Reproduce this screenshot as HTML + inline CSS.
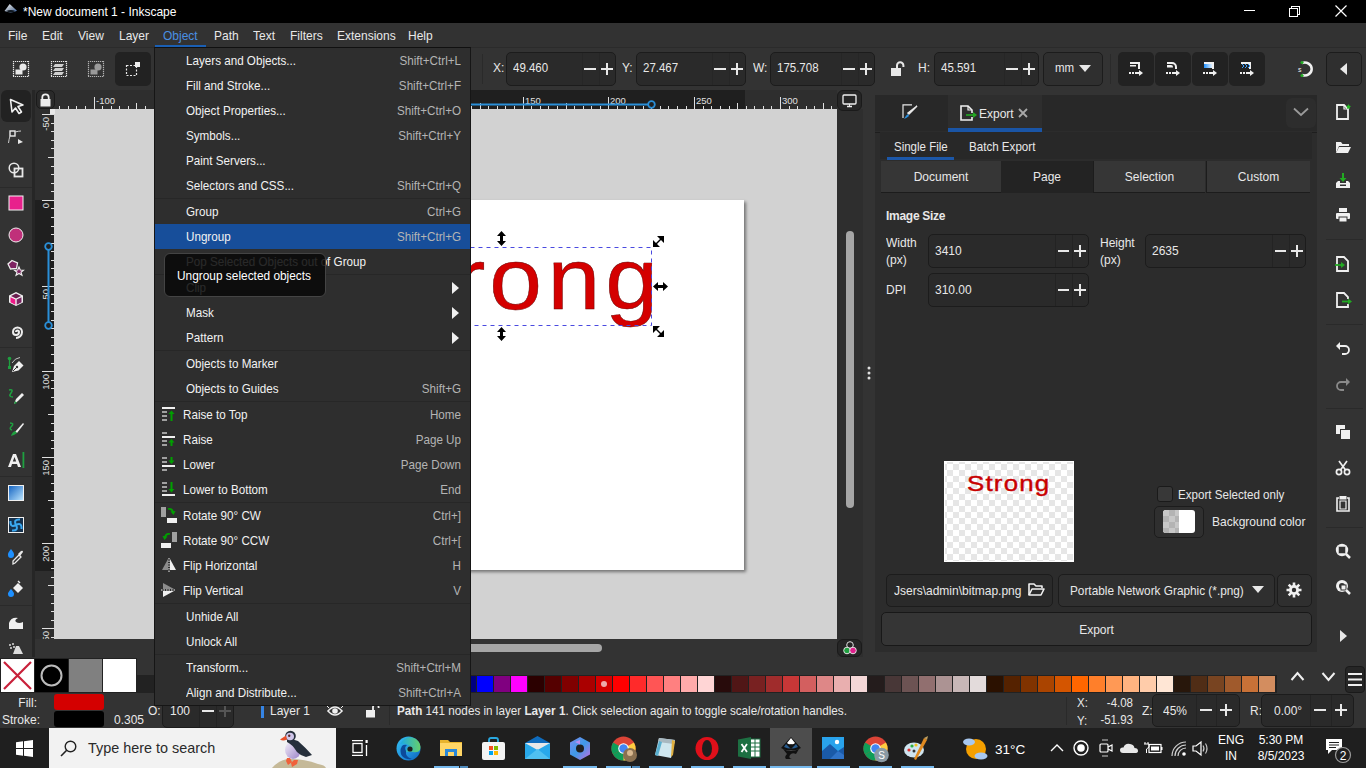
<!DOCTYPE html>
<html><head><meta charset="utf-8">
<style>
*{margin:0;padding:0;box-sizing:border-box}
html,body{width:1366px;height:768px;overflow:hidden;background:#333333;font-family:"Liberation Sans",sans-serif;color:#e8e8e8;font-size:12px}
.a{position:absolute}
.t{position:absolute;white-space:nowrap;line-height:1}
.ent{position:absolute;background:#2a2a2a;border:1px solid #1c1c1c;border-radius:5px}
.btn{position:absolute;background:#222222;border-radius:5px}
.pm{position:absolute;width:1px;background:#262626}
svg{position:absolute;overflow:visible}
</style></head><body>
<!-- title bar -->
<div class="a" style="left:0;top:0;width:1366px;height:23px;background:#000"></div>
<svg style="left:3px;top:3px" width="16" height="11" viewBox="0 0 16 11"><defs><linearGradient id="ik" x1="0" y1="0" x2="1" y2="1"><stop offset="0" stop-color="#ffffff"/><stop offset="0.6" stop-color="#8a9ab0"/><stop offset="1" stop-color="#3a6ab8"/></linearGradient></defs><path d="M6.7 1 L14 7.8 Q8 11 1.5 8 Z" fill="url(#ik)"/><path d="M3 8 Q8 6 12.5 8 Q8 10.5 3 8Z" fill="#101820"/></svg>
<div class="t" style="left:23px;top:6.32px;font-size:12.8px;color:#fff;transform:scaleX(0.938);transform-origin:0 0">*New document 1 - Inkscape</div>
<!-- window controls -->
<div class="a" style="left:1244px;top:10px;width:11px;height:1px;background:#fff"></div>
<div class="a" style="left:1291px;top:6px;width:9px;height:9px;border:1px solid #fff"></div>
<div class="a" style="left:1289px;top:8px;width:9px;height:9px;border:1px solid #fff;background:#000"></div>
<svg style="left:1335px;top:5px" width="12" height="12"><path d="M0.5 0.5 L11.5 11.5 M11.5 0.5 L0.5 11.5" stroke="#fff" stroke-width="1.2"/></svg>

<!-- menubar -->
<div class="a" style="left:0;top:23px;width:1366px;height:24px;background:#323232"></div>
<div class="t" style="left:8px;top:30.32px;font-size:12.8px;transform:scaleX(0.938);transform-origin:0 0">File</div>
<div class="t" style="left:42px;top:30.32px;font-size:12.8px;transform:scaleX(0.938);transform-origin:0 0">Edit</div>
<div class="t" style="left:78px;top:30.32px;font-size:12.8px;transform:scaleX(0.938);transform-origin:0 0">View</div>
<div class="t" style="left:119px;top:30.32px;font-size:12.8px;transform:scaleX(0.938);transform-origin:0 0">Layer</div>
<div class="t" style="left:163px;top:30.32px;color:#4a90e2;font-size:12.8px;transform:scaleX(0.938);transform-origin:0 0">Object</div>
<div class="a" style="left:155px;top:45px;width:51px;height:2px;background:#1a5fb4"></div>
<div class="t" style="left:214px;top:30.32px;font-size:12.8px;transform:scaleX(0.938);transform-origin:0 0">Path</div>
<div class="t" style="left:253px;top:30.32px;font-size:12.8px;transform:scaleX(0.938);transform-origin:0 0">Text</div>
<div class="t" style="left:290px;top:30.32px;font-size:12.8px;transform:scaleX(0.938);transform-origin:0 0">Filters</div>
<div class="t" style="left:337px;top:30.32px;font-size:12.8px;transform:scaleX(0.938);transform-origin:0 0">Extensions</div>
<div class="t" style="left:408px;top:30.32px;font-size:12.8px;transform:scaleX(0.938);transform-origin:0 0">Help</div>

<!-- command bar -->
<div class="a" style="left:0;top:47px;width:1366px;height:1px;background:#2b2b2b"></div>
<div id="cmdbar">
<svg style="left:13px;top:61px" width="16" height="16" viewBox="0 0 16 16"><path d="M0 0.5H16M0 15.5H16M0.5 0V16M15.5 0V16" stroke="#e8e8e8" stroke-width="1.2" stroke-dasharray="1.2 0.8" fill="none"/><circle cx="10" cy="6" r="3.6" fill="#e8e8e8"/><rect x="2.5" y="8.5" width="7" height="5" fill="#e8e8e8"/></svg>
<svg style="left:51px;top:61px" width="16" height="16" viewBox="0 0 16 16"><path d="M0 0.5H16M0 15.5H16M0.5 0V16M15.5 0V16" stroke="#e8e8e8" stroke-width="1.2" stroke-dasharray="1.2 0.8" fill="none"/><path d="M4 3h9l-2 3H2zM4 7h9l-2 3H2zM4 11h9l-2 3H2z" fill="#cfcfcf"/></svg>
<svg style="left:88px;top:61px" width="16" height="16" viewBox="0 0 16 16"><path d="M0 0.5H16M0 15.5H16M0.5 0V16M15.5 0V16" stroke="#b0b0b0" stroke-width="1.2" stroke-dasharray="1.2 0.8" fill="none"/><circle cx="10" cy="6" r="3.6" fill="#9a9a9a"/><rect x="2.5" y="8.5" width="7" height="5" fill="#9a9a9a"/></svg>
<div class="btn" style="left:115px;top:52px;width:36px;height:34px"></div>
<svg style="left:126px;top:62px" width="15" height="15" viewBox="0 0 15 15"><rect x="0.5" y="3.5" width="10" height="10" fill="none" stroke="#e8e8e8" stroke-width="1.2" stroke-dasharray="2 1.5"/><rect x="9" y="0" width="5" height="5" fill="#f0f0f0"/></svg>
<div class="a" style="left:482px;top:54px;width:1px;height:30px;background:#2a2a2a"></div>
<div class="t" style="left:493px;top:62.32px;font-size:12.8px;transform:scaleX(0.938);transform-origin:0 0">X:</div>
<div class="ent" style="left:506px;top:52px;width:110px;height:34px"></div>
<div class="pm" style="left:582px;top:53px;height:32px"></div><div class="pm" style="left:599px;top:53px;height:32px"></div>
<div class="t" style="left:513px;top:61.90px;font-size:12.8px;transform:scaleX(0.898);transform-origin:0 0">49.460</div>
<div class="a" style="left:584px;top:68px;width:12px;height:2px;background:#e8e8e8"></div>
<svg style="left:601px;top:63px" width="12" height="12"><path d="M0 6h12M6 0v12" stroke="#e8e8e8" stroke-width="2"/></svg>
<div class="t" style="left:622px;top:62.32px;font-size:12.8px;transform:scaleX(0.938);transform-origin:0 0">Y:</div>
<div class="ent" style="left:636px;top:52px;width:110px;height:34px"></div>
<div class="pm" style="left:712px;top:53px;height:32px"></div><div class="pm" style="left:729px;top:53px;height:32px"></div>
<div class="t" style="left:643px;top:61.90px;font-size:12.8px;transform:scaleX(0.898);transform-origin:0 0">27.467</div>
<div class="a" style="left:714px;top:68px;width:12px;height:2px;background:#e8e8e8"></div>
<svg style="left:731px;top:63px" width="12" height="12"><path d="M0 6h12M6 0v12" stroke="#e8e8e8" stroke-width="2"/></svg>
<div class="t" style="left:753px;top:62.32px;font-size:12.8px;transform:scaleX(0.938);transform-origin:0 0">W:</div>
<div class="ent" style="left:770px;top:52px;width:105px;height:34px"></div>
<div class="pm" style="left:841px;top:53px;height:32px"></div><div class="pm" style="left:858px;top:53px;height:32px"></div>
<div class="t" style="left:777px;top:61.90px;font-size:12.8px;transform:scaleX(0.898);transform-origin:0 0">175.708</div>
<div class="a" style="left:843px;top:68px;width:12px;height:2px;background:#e8e8e8"></div>
<svg style="left:860px;top:63px" width="12" height="12"><path d="M0 6h12M6 0v12" stroke="#e8e8e8" stroke-width="2"/></svg>
<svg style="left:891px;top:61px" width="15" height="16" viewBox="0 0 15 16"><path d="M6 7V4.5a3.2 3.2 0 0 1 6.4 0V6" fill="none" stroke="#e8e8e8" stroke-width="2"/><rect x="0" y="7" width="10" height="8" fill="#e8e8e8"/></svg>
<div class="t" style="left:918px;top:62.32px;font-size:12.8px;transform:scaleX(0.938);transform-origin:0 0">H:</div>
<div class="ent" style="left:934px;top:52px;width:105px;height:34px"></div>
<div class="pm" style="left:1004px;top:53px;height:32px"></div><div class="pm" style="left:1021px;top:53px;height:32px"></div>
<div class="t" style="left:941px;top:61.90px;font-size:12.8px;transform:scaleX(0.898);transform-origin:0 0">45.591</div>
<div class="a" style="left:1006px;top:68px;width:12px;height:2px;background:#e8e8e8"></div>
<svg style="left:1023px;top:63px" width="12" height="12"><path d="M0 6h12M6 0v12" stroke="#e8e8e8" stroke-width="2"/></svg>
<div class="a" style="left:1043px;top:52px;width:60px;height:34px;background:#2f2f2f;border:1px solid #1c1c1c;border-radius:5px"></div>
<div class="t" style="left:1055px;top:61.90px;font-size:12.8px;transform:scaleX(0.898);transform-origin:0 0">mm</div>
<svg style="left:1079px;top:65px" width="12" height="8"><path d="M0 0h12L6 7z" fill="#e8e8e8"/></svg>
<div class="a" style="left:1110px;top:54px;width:1px;height:30px;background:#2a2a2a"></div>
<div class="btn" style="left:1118px;top:52px;width:36px;height:34px"></div>
<div class="btn" style="left:1155px;top:52px;width:36px;height:34px"></div>
<div class="btn" style="left:1192px;top:52px;width:36px;height:34px"></div>
<div class="btn" style="left:1229px;top:52px;width:36px;height:34px"></div>
<svg style="left:1128px;top:61px" width="16" height="16" viewBox="0 0 16 16" fill="#f0f0f0"><path d="M2 1h10v7h-2V3H2z"/><rect x="2" y="4" width="6" height="1.5"/><rect x="1" y="11" width="2" height="2"/><rect x="4" y="11" width="2" height="2"/><rect x="7" y="11" width="4" height="2"/><path d="M11 9l4 3-4 3z"/></svg>
<svg style="left:1165px;top:61px" width="16" height="16" viewBox="0 0 16 16" fill="#f0f0f0"><path d="M2 1h5a5 5 0 0 1 5 5v2h-2V6a3 3 0 0 0-3-3H2z"/><path d="M2 4h4a2 2 0 0 1 2 2v0.5H2z"/><rect x="1" y="11" width="2" height="2"/><rect x="4" y="11" width="2" height="2"/><rect x="7" y="11" width="4" height="2"/><path d="M11 9l4 3-4 3z"/></svg>
<svg style="left:1202px;top:61px" width="16" height="16" viewBox="0 0 16 16"><defs><linearGradient id="gb" x1="0" x2="1"><stop offset="0" stop-color="#1e90ff"/><stop offset="1" stop-color="#e0f0ff"/></linearGradient></defs><path d="M2 1h10v7h-2V3H2z" fill="#f0f0f0"/><rect x="2" y="3" width="8" height="4" fill="url(#gb)"/><g fill="#f0f0f0"><rect x="1" y="11" width="2" height="2"/><rect x="4" y="11" width="2" height="2"/><rect x="7" y="11" width="4" height="2"/><path d="M11 9l4 3-4 3z"/></g></svg>
<svg style="left:1239px;top:61px" width="16" height="16" viewBox="0 0 16 16"><path d="M2 1h10v7h-2V3H2z" fill="#f0f0f0"/><path d="M3 3l2 2-2 2M6 3l2 2-2 2M9 3l2 2-2 2" stroke="#3aa0ff" fill="none" stroke-width="1"/><g fill="#f0f0f0"><rect x="1" y="11" width="2" height="2"/><rect x="4" y="11" width="2" height="2"/><rect x="7" y="11" width="4" height="2"/><path d="M11 9l4 3-4 3z"/></g></svg>
<svg style="left:1297px;top:60px" width="20" height="18" viewBox="0 0 20 18"><path d="M5 3a7 6.5 0 1 1 0 12" fill="none" stroke="#f0f0f0" stroke-width="2.5"/><circle cx="5" cy="2.5" r="1.6" fill="#22aa22"/><circle cx="5" cy="15.5" r="1.6" fill="#22aa22"/><text x="1" y="12" font-size="7" fill="#f0f0f0" font-family="Liberation Sans">s</text></svg>
<div class="a" style="left:1326px;top:52px;width:36px;height:34px;background:#2f2f2f;border:1px solid #1c1c1c;border-radius:5px"></div>
<svg style="left:1340px;top:63px" width="8" height="12"><path d="M7 0v12L0 6z" fill="#e8e8e8"/></svg>
</div>

<!-- toolbox -->
<div class="a" style="left:32px;top:90px;width:3px;height:570px;background:#262626"></div>
<div id="toolbox">
<div class="btn" style="left:1px;top:90px;width:30px;height:32px;border-radius:6px"></div>
<svg style="left:9px;top:98px" width="16" height="17" viewBox="0 0 16 17"><path d="M1.5 1.5 L14 7 L9 8.5 L12.5 14 L10 15.5 L6.5 10 L3 14 Z" fill="none" stroke="#f0f0f0" stroke-width="1.6" stroke-linejoin="round"/></svg>
<svg style="left:8px;top:130px" width="16" height="16" viewBox="0 0 16 16"><rect x="2" y="1" width="5" height="5" fill="none" stroke="#e8e8e8" stroke-width="1.4"/><path d="M7 2 Q11 1 13 1 M2 6 Q1 9 0.5 13" stroke="#ccc" fill="none"/><path d="M10 9 L15 12 L10 14 Z" fill="#e8e8e8"/></svg>
<svg style="left:8px;top:162px" width="16" height="16" viewBox="0 0 16 16"><circle cx="6" cy="6" r="4.8" fill="none" stroke="#e8e8e8" stroke-width="1.5"/><rect x="6.5" y="6.5" width="8" height="8" fill="none" stroke="#e8e8e8" stroke-width="1.8"/></svg>
<div class="a" style="left:0;top:187px;width:32px;height:1px;background:#2a2a2a"></div>
<svg style="left:8px;top:195px" width="16" height="16"><rect x="1" y="1" width="14" height="14" fill="#e8218c" stroke="#f5f5f5" stroke-width="1"/></svg>
<svg style="left:8px;top:227px" width="16" height="16"><circle cx="8" cy="8" r="7" fill="#c0307a" stroke="#f0f0f0" stroke-width="1"/></svg>
<svg style="left:7px;top:259px" width="18" height="17" viewBox="0 0 18 17"><path d="M5 1.5 L10.5 4 L9.5 9.5 L3.5 10 L1 5 Z" fill="#7e2462" stroke="#eee" stroke-width="1.3"/><path d="M12 8 L13.3 11 L16.5 11.2 L14 13.2 L15 16.3 L12 14.5 L9 16.3 L10 13.2 L7.5 11.2 L10.7 11 Z" fill="#7e2462" stroke="#eee" stroke-width="1.1"/></svg>
<svg style="left:8px;top:291px" width="16" height="16" viewBox="0 0 16 16"><path d="M8 1 L15 4.5 L15 11.5 L8 15 L1 11.5 L1 4.5 Z" fill="#f0f0f0"/><path d="M8 2.5 L13 5 L8 7.5 L3 5Z" fill="#6a2050"/><path d="M2.5 6.2 L7.3 8.6 L7.3 13.8 L2.5 11.3Z" fill="#ee1a88"/><path d="M13.5 6.2 L8.7 8.6 L8.7 13.8 L13.5 11.3Z" fill="#7a2462"/></svg>
<svg style="left:8px;top:323px" width="16" height="16" viewBox="0 0 16 16"><path d="M8 9 a1.5 1.5 0 0 1 3 0 a3 3 0 0 1 -6 0 a4.5 4.5 0 0 1 9 0 a6 6 0 0 1 -6 6" fill="none" stroke="#eeeeee" stroke-width="2"/></svg>
<div class="a" style="left:0;top:347px;width:32px;height:1px;background:#2a2a2a"></div>
<svg style="left:7px;top:356px" width="18" height="17" viewBox="0 0 18 17"><path d="M2.5 3V11" stroke="#1fa040" stroke-width="1.3"/><circle cx="2.5" cy="2.5" r="1.8" fill="#1fa040"/><rect x="1" y="10" width="3" height="3" fill="#1fa040"/><path d="M5 7 Q8 2 13 1.5" stroke="#cfcfcf" fill="none" stroke-width="0.9"/><path d="M5 16 L7 10 L12 5 L16.5 9.5 L11.5 14.5 Z" fill="#f0f0f0"/><path d="M6 15 L9.5 11.5" stroke="#333" stroke-width="1"/><circle cx="10" cy="11" r="1.2" fill="#333"/></svg>
<svg style="left:7px;top:388px" width="18" height="18" viewBox="0 0 18 18"><path d="M2 2 Q7 1 4 5 Q1 9 6 9" stroke="#1fa040" fill="none" stroke-width="1.6"/><path d="M7 16 L9 11 L15 5 L17 7 L11 13 Z" fill="#f0f0f0"/><path d="M7 16 L8 13 L10 15Z" fill="#1fa040"/></svg>
<svg style="left:7px;top:420px" width="18" height="18" viewBox="0 0 18 18"><path d="M3 3 Q8 3 4 7 Q2 9 5 10" stroke="#1fa040" fill="none" stroke-width="1.5"/><path d="M8 12 L16 3 L17 4 L10 13 Z" fill="#f0f0f0"/><path d="M4 16 Q5 12 8 11 L10 13 Q8 15 4 16Z" fill="#1fa040"/></svg>
<svg style="left:7px;top:451px" width="20" height="18" viewBox="0 0 20 18"><path d="M1 16 L6 3 L9 3 L14 16 L11 16 L10 13 L5 13 L4 16Z M5.8 10.5 L9.2 10.5 L7.5 6Z" fill="#f0f0f0" fill-rule="evenodd"/><rect x="15.5" y="1" width="1.8" height="16" fill="#1fa040"/></svg>
<div class="a" style="left:0;top:476px;width:32px;height:1px;background:#2a2a2a"></div>
<svg style="left:8px;top:485px" width="16" height="16"><defs><linearGradient id="gt" x1="0" y1="0" x2="1" y2="1"><stop offset="0" stop-color="#1060c0"/><stop offset="1" stop-color="#c0e8ff"/></linearGradient></defs><rect x="0.5" y="0.5" width="15" height="15" fill="url(#gt)" stroke="#f0f0f0"/></svg>
<svg style="left:8px;top:517px" width="16" height="16" viewBox="0 0 16 16"><rect x="0.5" y="0.5" width="15" height="15" fill="#16324e" stroke="#f0f0f0"/><path d="M8 8 Q5 2 12 2.5 M8 8 Q14 5 13.5 12 M8 8 Q11 14 4 13.5 M8 8 Q2 11 2.5 4" stroke="#3aa8f0" fill="none" stroke-width="2"/></svg>
<svg style="left:7px;top:548px" width="18" height="17" viewBox="0 0 18 17"><path d="M4 1 Q7.5 5 7 7 A3 3 0 0 1 1 7 Q0.5 5 4 1Z" fill="#1e90ff"/><path d="M6 16 L6 13 L12 7 L14 9 L8 15 Z" fill="none" stroke="#e8e8e8" stroke-width="1.3"/><path d="M11 6 L14 3 Q16 2 16 4 L13 8Z" fill="#e8e8e8"/></svg>
<svg style="left:7px;top:580px" width="18" height="17" viewBox="0 0 18 17"><path d="M4 9 Q7.5 13 7 14 A3 3 0 0 1 1 14 Q0.5 13 4 9Z" fill="#1e90ff"/><path d="M6 8 L11 3 L16 8 L11 13Z" fill="#f0f0f0"/><path d="M11 1 L13 3" stroke="#f0f0f0" stroke-width="1.4"/></svg>
<div class="a" style="left:0;top:605px;width:32px;height:1px;background:#2a2a2a"></div>
<svg style="left:8px;top:614px" width="16" height="16" viewBox="0 0 16 16"><path d="M1 15 L1 9 Q3 3 10 4 Q6 6 8 8 Q11 10 15 8 L15 15 Z" fill="#f0f0f0"/></svg>
<svg style="left:8px;top:643px" width="16" height="12" viewBox="0 0 16 12"><g fill="#ddd"><circle cx="2" cy="2" r="1"/><circle cx="5" cy="1" r="1"/><circle cx="3" cy="5" r="1"/><circle cx="6" cy="4" r="1"/><path d="M8 3 L11 3 L15 11 L5 11Z"/></g></svg>
</div>

<!-- rulers & canvas -->
<div id="canvasarea">
<div class="a" style="left:35px;top:90px;width:802px;height:19px;background:#2e2e2e"></div>
<div class="a" style="left:266px;top:90px;width:479px;height:19px;background:#1f1f1f"></div>
<div class="a" style="left:35px;top:109px;width:19px;height:530px;background:#2e2e2e"></div>
<div class="a" style="left:35px;top:200px;width:19px;height:371px;background:#1f1f1f"></div>
<div class="a" style="left:36px;top:90px;width:19px;height:19px;background:#2a2a2a;border:1px solid #1a1a1a;border-radius:5px"></div>
<svg style="left:40px;top:93px" width="11" height="14" viewBox="0 0 11 14"><path d="M2.3 6.5V4.5a3.2 3.2 0 0 1 6.4 0V6.5" fill="none" stroke="#ececec" stroke-width="1.8"/><rect x="0.5" y="6" width="10" height="7.5" fill="#ececec"/></svg>
<svg style="left:0;top:0" width="1366" height="768"><path d="M59.5 106V109M68.5 106V109M76.5 106V109M85.5 106V109M94.5 97V109M102.5 106V109M111.5 106V109M119.5 106V109M128.5 106V109M136.5 103V109M145.5 106V109M154.5 106V109M162.5 106V109M171.5 106V109M179.5 97V109M188.5 106V109M197.5 106V109M205.5 106V109M214.5 106V109M222.5 103V109M231.5 106V109M239.5 106V109M248.5 106V109M257.5 106V109M265.5 97V109M274.5 106V109M282.5 106V109M291.5 106V109M300.5 106V109M308.5 103V109M317.5 106V109M325.5 106V109M334.5 106V109M342.5 106V109M351.5 97V109M360.5 106V109M368.5 106V109M377.5 106V109M385.5 106V109M394.5 103V109M402.5 106V109M411.5 106V109M420.5 106V109M428.5 106V109M437.5 97V109M445.5 106V109M454.5 106V109M463.5 106V109M471.5 106V109M480.5 103V109M488.5 106V109M497.5 106V109M505.5 106V109M514.5 106V109M523.5 97V109M531.5 106V109M540.5 106V109M548.5 106V109M557.5 106V109M566.5 103V109M574.5 106V109M583.5 106V109M591.5 106V109M600.5 106V109M608.5 97V109M617.5 106V109M626.5 106V109M634.5 106V109M643.5 106V109M651.5 103V109M660.5 106V109M668.5 106V109M677.5 106V109M686.5 106V109M694.5 97V109M703.5 106V109M711.5 106V109M720.5 106V109M729.5 106V109M737.5 103V109M746.5 106V109M754.5 106V109M763.5 106V109M771.5 106V109M780.5 97V109M789.5 106V109M797.5 106V109M806.5 106V109M814.5 106V109M823.5 103V109M831.5 106V109M42 114.5H54M51 123.5H54M51 131.5H54M51 140.5H54M51 148.5H54M48 157.5H54M51 166.5H54M51 174.5H54M51 183.5H54M51 191.5H54M42 200.5H54M51 208.5H54M51 217.5H54M51 226.5H54M51 234.5H54M48 243.5H54M51 251.5H54M51 260.5H54M51 268.5H54M51 277.5H54M42 286.5H54M51 294.5H54M51 303.5H54M51 311.5H54M51 320.5H54M48 328.5H54M51 337.5H54M51 345.5H54M51 354.5H54M51 363.5H54M42 371.5H54M51 380.5H54M51 388.5H54M51 397.5H54M51 405.5H54M48 414.5H54M51 423.5H54M51 431.5H54M51 440.5H54M51 448.5H54M42 457.5H54M51 465.5H54M51 474.5H54M51 483.5H54M51 491.5H54M48 500.5H54M51 508.5H54M51 517.5H54M51 525.5H54M51 534.5H54M42 543.5H54M51 551.5H54M51 560.5H54M51 568.5H54M51 577.5H54M48 585.5H54M51 594.5H54M51 603.5H54M51 611.5H54M51 620.5H54M42 628.5H54M51 637.5H54" stroke="#e0e0e0" stroke-width="1" fill="none"/>
<defs><clipPath id="lrc"><rect x="35" y="109" width="19" height="530"/></clipPath></defs><g font-family="Liberation Sans" font-size="9.5" fill="#e0e0e0"><text x="96" y="104">-100</text><text x="181" y="104">-50</text><text x="267" y="104">0</text><text x="353" y="104">50</text><text x="439" y="104">100</text><text x="525" y="104">150</text><text x="610" y="104">200</text><text x="696" y="104">250</text><text x="782" y="104">300</text><g clip-path="url(#lrc)"><text transform="translate(48.5,117) rotate(-90)" text-anchor="end">-50</text><text transform="translate(48.5,203) rotate(-90)" text-anchor="end">0</text><text transform="translate(48.5,289) rotate(-90)" text-anchor="end">50</text><text transform="translate(48.5,374) rotate(-90)" text-anchor="end">100</text><text transform="translate(48.5,460) rotate(-90)" text-anchor="end">150</text><text transform="translate(48.5,546) rotate(-90)" text-anchor="end">200</text><text transform="translate(48.5,631) rotate(-90)" text-anchor="end">250</text></g></g>
<path d="M351 104.5H649" stroke="#2a8fd8" stroke-width="2"/>
<circle cx="651.5" cy="104.5" r="3.3" fill="#1f1f1f" stroke="#2a8fd8" stroke-width="1.8"/>
<path d="M48.5 249V323" stroke="#2a8fd8" stroke-width="2"/>
<circle cx="48.5" cy="246.5" r="3.3" fill="#1f1f1f" stroke="#2a8fd8" stroke-width="1.8"/>
<circle cx="48.5" cy="325.5" r="3.3" fill="#1f1f1f" stroke="#2a8fd8" stroke-width="1.8"/>
</svg>
<div class="a" style="left:54px;top:109px;width:783px;height:530px;background:#d2d2d2;overflow:hidden">
 <div class="a" style="left:211px;top:91px;width:479px;height:370px;background:#fff;box-shadow:2px 2px 3px rgba(0,0,0,0.45)"></div>
</div>
<svg style="left:0;top:0" width="1366" height="768">
<g fill="#d40000" stroke="#600000" stroke-width="0.45" font-family="Liberation Sans" font-size="87">
<text transform="translate(453,309) scale(1.12,1)">r</text>
<text transform="translate(489.2,309) scale(1.09,1)">o</text>
<text transform="translate(547.4,309) scale(1.09,1)">n</text>
<text transform="translate(605.2,309) scale(1.09,1)">g</text>
</g>
<rect x="350.5" y="247.5" width="301" height="78" fill="none" stroke="#4a4ae0" stroke-width="1" stroke-dasharray="4 4"/>
<g fill="#000">
<path d="M501.5 231 L506 236 L503 236 L503 241 L506 241 L501.5 246 L497 241 L500 241 L500 236 L497 236 Z"/>
<path d="M501.5 327 L506 332 L503 332 L503 336 L506 336 L501.5 341 L497 336 L500 336 L500 332 L497 332 Z"/>
<path d="M653 286.5 L658 282 L658 285 L663 285 L663 282 L668 286.5 L663 291 L663 288 L658 288 L658 291 Z"/>
<path d="M653 247 L653 240 L656 243 L660 239 L657 236 L664 236 L664 243 L661 240 L657 244 L660 247 Z"/>
<path d="M653 326 L660 326 L657 329 L661 333 L664 330 L664 337 L657 337 L660 334 L656 330 L653 333 Z"/>
</g>
</svg>
<div class="a" style="left:837px;top:109px;width:26px;height:548px;background:#2e2e2e"></div>
<div class="a" style="left:846px;top:231px;width:8px;height:277px;background:#a6a6a6;border-radius:4px"></div>
<div class="a" style="left:54px;top:639px;width:783px;height:18px;background:#333333"></div>
<div class="a" style="left:200px;top:644px;width:402px;height:8px;background:#a6a6a6;border-radius:4px"></div>
<div class="a" style="left:837px;top:90px;width:25px;height:21px;background:#262626;border:1px solid #1a1a1a;border-radius:6px"></div>
<div class="a" style="left:50px;top:109px;width:5px;height:5px;background:#e8e8e8"></div>
<svg style="left:842px;top:94px" width="15" height="14" viewBox="0 0 15 14"><rect x="1" y="1" width="13" height="9" rx="1" fill="none" stroke="#f0f0f0" stroke-width="1.3"/><path d="M5 12.5H10" stroke="#f0f0f0" stroke-width="1.5"/><path d="M7.5 10V12" stroke="#f0f0f0"/></svg>
<div class="a" style="left:837px;top:639px;width:25px;height:18px;background:#262626;border:1px solid #1a1a1a;border-radius:6px"></div>
<svg style="left:842px;top:640px" width="16" height="16" viewBox="0 0 16 16"><circle cx="8" cy="5" r="3.3" fill="#262626" stroke="#e0e0e0" stroke-width="1"/><circle cx="5" cy="10.5" r="3.3" fill="#1fa040" stroke="#e0e0e0" stroke-width="1"/><circle cx="11" cy="10.5" r="3.3" fill="#e0208c" stroke="#e0e0e0" stroke-width="1"/></svg>
<svg style="left:867px;top:366px" width="4" height="14"><circle cx="2" cy="2" r="1.5" fill="#e0e0e0"/><circle cx="2" cy="7" r="1.5" fill="#e0e0e0"/><circle cx="2" cy="12" r="1.5" fill="#e0e0e0"/></svg>
</div>

<!-- dock -->
<div id="dock">
<div class="a" style="left:875px;top:95px;width:442px;height:557px;background:#2c2c2c"></div>
<div class="a" style="left:875px;top:95px;width:442px;height:36px;background:#282828"></div>
<div class="a" style="left:948px;top:95px;width:94px;height:36px;background:#2e2e2e"></div>
<div class="a" style="left:948px;top:128px;width:94px;height:4px;background:#1a55a6"></div>
<div class="a" style="left:875px;top:132px;width:442px;height:1px;background:#1e1e1e"></div>
<div class="a" style="left:1286px;top:98px;width:30px;height:30px;background:#2d2d2d;border-radius:6px"></div>
<svg style="left:1293px;top:107px" width="16" height="10"><path d="M1 1.5L8 8L15 1.5" fill="none" stroke="#9a9a9a" stroke-width="1.8"/></svg>
<svg style="left:902px;top:104px" width="16" height="16" viewBox="0 0 16 16"><path d="M10 0.8H1V14" fill="none" stroke="#e8e8e8" stroke-width="1.2"/><path d="M15 2 L7 10 L6 9Z" fill="#e8e8e8" stroke="#e8e8e8" stroke-width="1.5"/><path d="M6 10 Q4 11 2 15 Q5 14 7 12Z" fill="#2a90e0"/></svg>
<svg style="left:960px;top:105px" width="18" height="17" viewBox="0 0 18 17"><path d="M12 8V5L8 1H1V15H12V12" fill="none" stroke="#f0f0f0" stroke-width="1.6"/><path d="M8 1V5H12" fill="none" stroke="#f0f0f0" stroke-width="1.2"/><path d="M6 10H14" stroke="#22aa22" stroke-width="1.6"/><path d="M13 7L17 10L13 13Z" fill="#22aa22"/></svg>
<div class="t" style="left:979px;top:108.12px;font-size:12.8px;;transform:scaleX(0.938);transform-origin:0 0">Export</div>
<svg style="left:1018px;top:108px" width="10" height="10"><path d="M1 1L9 9M9 1L1 9" stroke="#a8a8a8" stroke-width="1.8"/></svg>
<div class="a" style="left:880px;top:132px;width:432px;height:27px;background:#282828"></div>
<div class="a" style="left:887px;top:157px;width:67px;height:3px;background:#1c57a8"></div>
<div class="t" style="left:894px;top:141.20px;font-size:12.8px;;transform:scaleX(0.898);transform-origin:0 0">Single File</div>
<div class="t" style="left:969px;top:141.18px;font-size:12.8px;;transform:scaleX(0.906);transform-origin:0 0">Batch Export</div>
<div class="a" style="left:881px;top:161px;width:120px;height:32px;background:#363636;border-bottom:1px solid #1c1c1c;"></div>
<div class="t" style="left:881px;top:171.32px;width:120px;text-align:center;font-size:12.8px;transform:scaleX(0.938);transform-origin:50% 0">Document</div>
<div class="a" style="left:1001px;top:161px;width:92px;height:32px;background:#232323;"></div>
<div class="t" style="left:1001px;top:171.32px;width:92px;text-align:center;font-size:12.8px;transform:scaleX(0.938);transform-origin:50% 0">Page</div>
<div class="a" style="left:1094px;top:161px;width:111px;height:32px;background:#363636;border-bottom:1px solid #1c1c1c;"></div>
<div class="t" style="left:1094px;top:171.32px;width:111px;text-align:center;font-size:12.8px;transform:scaleX(0.938);transform-origin:50% 0">Selection</div>
<div class="a" style="left:1207px;top:161px;width:103px;height:32px;background:#363636;border-bottom:1px solid #1c1c1c;"></div>
<div class="t" style="left:1207px;top:171.32px;width:103px;text-align:center;font-size:12.8px;transform:scaleX(0.938);transform-origin:50% 0">Custom</div>
<div class="a" style="left:1093px;top:161px;width:1px;height:32px;background:#1c1c1c"></div>
<div class="a" style="left:1206px;top:161px;width:1px;height:32px;background:#1c1c1c"></div>
<div class="t" style="left:886px;top:210.12px;font-size:12.8px;letter-spacing:-0.3px;transform:scaleX(0.938);transform-origin:0 0"><b>Image Size</b></div>
<div class="t" style="left:886px;top:237.12px;font-size:12.8px;;transform:scaleX(0.938);transform-origin:0 0">Width</div>
<div class="t" style="left:886px;top:254.12px;font-size:12.8px;;transform:scaleX(0.938);transform-origin:0 0">(px)</div>
<div class="ent" style="left:928px;top:234px;width:161px;height:34px"></div><div class="pm" style="left:1055px;top:235px;height:32px;background:#232323"></div><div class="pm" style="left:1072px;top:235px;height:32px;background:#232323"></div><div class="a" style="left:1058px;top:250px;width:11px;height:2px;background:#e8e8e8"></div><svg style="left:1074px;top:245px" width="12" height="12"><path d="M0 6h12M6 0v12" stroke="#e8e8e8" stroke-width="2"/></svg><div class="t" style="left:935px;top:245.42px;font-size:12.8px;;transform:scaleX(0.938);transform-origin:0 0">3410</div>
<div class="t" style="left:1100px;top:237.12px;font-size:12.8px;;transform:scaleX(0.938);transform-origin:0 0">Height</div>
<div class="t" style="left:1100px;top:254.12px;font-size:12.8px;;transform:scaleX(0.938);transform-origin:0 0">(px)</div>
<div class="ent" style="left:1145px;top:234px;width:161px;height:34px"></div><div class="pm" style="left:1272px;top:235px;height:32px;background:#232323"></div><div class="pm" style="left:1289px;top:235px;height:32px;background:#232323"></div><div class="a" style="left:1275px;top:250px;width:11px;height:2px;background:#e8e8e8"></div><svg style="left:1291px;top:245px" width="12" height="12"><path d="M0 6h12M6 0v12" stroke="#e8e8e8" stroke-width="2"/></svg><div class="t" style="left:1152px;top:245.42px;font-size:12.8px;;transform:scaleX(0.938);transform-origin:0 0">2635</div>
<div class="t" style="left:886px;top:284.12px;font-size:12.8px;;transform:scaleX(0.938);transform-origin:0 0">DPI</div>
<div class="ent" style="left:928px;top:273px;width:161px;height:34px"></div><div class="pm" style="left:1055px;top:274px;height:32px;background:#232323"></div><div class="pm" style="left:1072px;top:274px;height:32px;background:#232323"></div><div class="a" style="left:1058px;top:289px;width:11px;height:2px;background:#e8e8e8"></div><svg style="left:1074px;top:284px" width="12" height="12"><path d="M0 6h12M6 0v12" stroke="#e8e8e8" stroke-width="2"/></svg><div class="t" style="left:935px;top:284.42px;font-size:12.8px;;transform:scaleX(0.938);transform-origin:0 0">310.00</div>
<div class="a" style="left:944px;top:461px;width:130px;height:101px;background-color:#fff;background-image:linear-gradient(45deg,#e6e6e6 25%,transparent 25%,transparent 75%,#e6e6e6 75%),linear-gradient(45deg,#e6e6e6 25%,transparent 25%,transparent 75%,#e6e6e6 75%);background-size:12px 12px;background-position:2px 2px,8px 8px;border:1px solid #fff"></div>
<svg style="left:0;top:0" width="1366" height="768"><text transform="translate(967,491) scale(1.15,1)" font-family="Liberation Sans" font-size="22.5" fill="#c80000" stroke="#c80000" stroke-width="0.4" textLength="71.5" lengthAdjust="spacing">Strong</text></svg>
<div class="a" style="left:1157px;top:486px;width:16px;height:16px;background:#383838;border:1px solid #1a1a1a;border-radius:3px"></div>
<div class="t" style="left:1178px;top:489.18px;font-size:12.8px;;transform:scaleX(0.906);transform-origin:0 0">Export Selected only</div>
<div class="a" style="left:1154px;top:506px;width:50px;height:32px;background:#2f2f2f;border:1px solid #1c1c1c;border-radius:5px"></div>
<div class="a" style="left:1163px;top:510px;width:32px;height:23px;border-radius:3px;overflow:hidden;background:#fff"><div class="a" style="left:0;top:0;width:16px;height:23px;background-color:#c8c8c8;background-image:linear-gradient(45deg,#b4b4b4 25%,transparent 25%,transparent 75%,#b4b4b4 75%),linear-gradient(45deg,#b4b4b4 25%,transparent 25%,transparent 75%,#b4b4b4 75%);background-size:12px 12px;background-position:0 0,6px 6px"></div></div>
<div class="t" style="left:1212px;top:516.12px;font-size:12.8px;;transform:scaleX(0.938);transform-origin:0 0">Background color</div>
<div class="ent" style="left:886px;top:574px;width:167px;height:33px;background:#2a2a2a"></div>
<div class="t" style="left:894px;top:584.62px;font-size:12.8px;;transform:scaleX(0.938);transform-origin:0 0">Jsers\admin\bitmap.png</div>
<svg style="left:1028px;top:582px" width="17" height="15" viewBox="0 0 17 15"><path d="M1 13V2H6L8 4H14V6" fill="none" stroke="#f0f0f0" stroke-width="1.6" stroke-linejoin="round"/><path d="M1 13L4 7H16L13 13Z" fill="none" stroke="#f0f0f0" stroke-width="1.6" stroke-linejoin="round"/></svg>
<div class="a" style="left:1058px;top:574px;width:217px;height:33px;background:#2f2f2f;border:1px solid #1c1c1c;border-radius:5px"></div>
<div class="t" style="left:1070px;top:584.65px;font-size:12.8px;;transform:scaleX(0.922);transform-origin:0 0">Portable Network Graphic (*.png)</div>
<svg style="left:1252px;top:586px" width="12" height="8"><path d="M0 0h12L6 7z" fill="#e8e8e8"/></svg>
<div class="a" style="left:1277px;top:574px;width:35px;height:33px;background:#2f2f2f;border:1px solid #1c1c1c;border-radius:5px"></div>
<svg style="left:1286px;top:582px" width="16" height="16" viewBox="0 0 16 16"><g fill="#f0f0f0"><circle cx="8" cy="8" r="5"/><g stroke="#f0f0f0" stroke-width="2.6"><path d="M8 0.5V15.5M0.5 8H15.5M2.7 2.7L13.3 13.3M13.3 2.7L2.7 13.3"/></g></g><circle cx="8" cy="8" r="2.2" fill="#2f2f2f"/></svg>
<div class="a" style="left:881px;top:612px;width:431px;height:34px;background:#353535;border:1px solid #181818;border-radius:5px"></div>
<div class="t" style="left:881px;top:623.82px;width:431px;text-align:center;font-size:12.8px;transform:scaleX(0.938);transform-origin:50% 0">Export</div>
</div>

<!-- right commands -->
<div id="rcmd">
<svg style="left:1335px;top:104px" width="17" height="17" viewBox="0 0 17 17"><path d="M2 1H9L13 5V15H2Z" fill="none" stroke="#f0f0f0" stroke-width="1.8"/><path d="M9 1V5H13" fill="none" stroke="#f0f0f0" stroke-width="1.2"/><path d="M13.5 0 L14.3 1.7 L16 2 L14.8 3.2 L15 5 L13.5 4.2 L12 5 L12.2 3.2 L11 2 L12.7 1.7Z" fill="#22bb22"/></svg>
<svg style="left:1335px;top:139px" width="17" height="17" viewBox="0 0 17 17"><path d="M1 3H6L7.5 5H14V7H4L1 14Z" fill="#f0f0f0"/><path d="M4 8H16L13 14H1Z" fill="#f0f0f0"/></svg>
<svg style="left:1335px;top:173px" width="17" height="17" viewBox="0 0 17 17"><path d="M8 0V7" stroke="#22aa22" stroke-width="2"/><path d="M4.5 5L8 9L11.5 5Z" fill="#22aa22"/><path d="M1 10L3 8H5V10H11V8H13L15 10V15H1Z" fill="#f0f0f0"/><rect x="5" y="11.5" width="6" height="1.5" fill="#333"/></svg>
<svg style="left:1335px;top:207px" width="17" height="17" viewBox="0 0 17 17"><rect x="4" y="1" width="8" height="4" fill="#f0f0f0"/><rect x="1" y="6" width="14" height="6" rx="1" fill="#f0f0f0"/><rect x="4" y="10" width="8" height="5" fill="#f0f0f0" stroke="#333" stroke-width="1"/></svg>
<svg style="left:1335px;top:256px" width="17" height="17" viewBox="0 0 17 17"><path d="M2 1H9L13 5V15H2Z" fill="none" stroke="#f0f0f0" stroke-width="1.8"/><path d="M0 9H7" stroke="#22aa22" stroke-width="1.8"/><path d="M6 6L10 9L6 12Z" fill="#22aa22"/></svg>
<svg style="left:1335px;top:292px" width="17" height="17" viewBox="0 0 17 17"><path d="M13 7V5L9 1H2V15H13V12" fill="none" stroke="#f0f0f0" stroke-width="1.8"/><path d="M7 9.5H14" stroke="#22aa22" stroke-width="1.8"/><path d="M13 6.5L17 9.5L13 12.5Z" fill="#22aa22"/></svg>
<svg style="left:1335px;top:340px" width="17" height="17" viewBox="0 0 17 17"><path d="M4 6H10a4 4 0 0 1 0 8H7" fill="none" stroke="#f0f0f0" stroke-width="1.8"/><path d="M5 2L1 6L5 10Z" fill="#f0f0f0"/></svg>
<svg style="left:1335px;top:376px" width="17" height="17" viewBox="0 0 17 17"><path d="M12 6H6a4 4 0 0 0 0 8H9" fill="none" stroke="#8a8a8a" stroke-width="1.8"/><path d="M11 2L15 6L11 10Z" fill="#8a8a8a"/></svg>
<svg style="left:1335px;top:424px" width="17" height="17" viewBox="0 0 17 17"><rect x="1" y="1" width="9" height="9" fill="#f0f0f0"/><rect x="5.5" y="5.5" width="10" height="10" fill="#f0f0f0" stroke="#333" stroke-width="1"/></svg>
<svg style="left:1335px;top:460px" width="17" height="17" viewBox="0 0 17 17"><circle cx="4" cy="12" r="2.6" fill="none" stroke="#f0f0f0" stroke-width="1.7"/><circle cx="12" cy="12" r="2.6" fill="none" stroke="#f0f0f0" stroke-width="1.7"/><path d="M5.5 10L12 1M10.5 10L4 1" stroke="#f0f0f0" stroke-width="1.7"/></svg>
<svg style="left:1335px;top:495px" width="17" height="17" viewBox="0 0 17 17"><path d="M4 3H2V16H14V3H12" fill="none" stroke="#f0f0f0" stroke-width="1.6"/><rect x="4.5" y="1" width="7" height="3.5" fill="#f0f0f0"/><path d="M5 6H11V14H5Z" fill="none" stroke="#f0f0f0" stroke-width="1.2"/></svg>
<svg style="left:1335px;top:543px" width="17" height="17" viewBox="0 0 17 17"><circle cx="7" cy="7" r="6.2" fill="#f0f0f0"/><rect x="3.5" y="3.5" width="7" height="7" fill="#333" stroke="#f0f0f0" stroke-width="1" stroke-dasharray="1 1"/><path d="M11 11L15 15" stroke="#f0f0f0" stroke-width="2.5"/></svg>
<svg style="left:1335px;top:579px" width="17" height="17" viewBox="0 0 17 17"><circle cx="7" cy="7" r="6" fill="#f0f0f0"/><circle cx="7" cy="7" r="3" fill="#333"/><rect x="6" y="6" width="5" height="5" fill="#f0f0f0" stroke="#333"/><path d="M11 11L15 15" stroke="#f0f0f0" stroke-width="2.5"/></svg>
<div class="a" style="left:1326px;top:239px;width:37px;height:1px;background:#2a2a2a"></div>
<div class="a" style="left:1326px;top:324px;width:37px;height:1px;background:#2a2a2a"></div>
<div class="a" style="left:1326px;top:408px;width:37px;height:1px;background:#2a2a2a"></div>
<div class="a" style="left:1326px;top:527px;width:37px;height:1px;background:#2a2a2a"></div>
<svg style="left:1340px;top:630px" width="8" height="12"><path d="M0 0v12L7 6z" fill="#e8e8e8"/></svg>
</div>

<!-- palette -->
<div id="palette">
<div class="a" style="left:0;top:657px;width:1366px;height:36px;background:#333333"></div>
<div class="a" style="left:0;top:658px;width:137px;height:35px;background:#222"></div>
<div class="a" style="left:1px;top:659px;width:33px;height:33px;background:#fff"></div>
<svg style="left:1px;top:659px" width="33" height="33"><path d="M3 3L30 30M30 3L3 30" stroke="#c8203a" stroke-width="2.2"/></svg>
<div class="a" style="left:35px;top:659px;width:33px;height:33px;background:#000"></div>
<svg style="left:35px;top:659px" width="33" height="33"><circle cx="16.5" cy="16.5" r="10" fill="none" stroke="#bbb" stroke-width="2"/></svg>
<div class="a" style="left:69px;top:659px;width:33px;height:33px;background:#808080"></div>
<div class="a" style="left:103px;top:659px;width:33px;height:33px;background:#fff"></div>
<svg style="left:0;top:0" width="1366" height="768"><rect x="137" y="675" width="1140" height="18" fill="#222"/><rect x="154" y="676" width="16" height="16" fill="#1a1a1a"/><rect x="171" y="676" width="16" height="16" fill="#333333"/><rect x="188" y="676" width="16" height="16" fill="#4d4d4d"/><rect x="205" y="676" width="16" height="16" fill="#666666"/><rect x="222" y="676" width="16" height="16" fill="#808080"/><rect x="239" y="676" width="16" height="16" fill="#999999"/><rect x="256" y="676" width="16" height="16" fill="#b3b3b3"/><rect x="273" y="676" width="16" height="16" fill="#cccccc"/><rect x="290" y="676" width="16" height="16" fill="#e6e6e6"/><rect x="307" y="676" width="16" height="16" fill="#ffffff"/><rect x="324" y="676" width="16" height="16" fill="#800000"/><rect x="341" y="676" width="16" height="16" fill="#ff0000"/><rect x="358" y="676" width="16" height="16" fill="#808000"/><rect x="375" y="676" width="16" height="16" fill="#ffff00"/><rect x="392" y="676" width="16" height="16" fill="#008000"/><rect x="409" y="676" width="16" height="16" fill="#00ff00"/><rect x="426" y="676" width="16" height="16" fill="#008080"/><rect x="443" y="676" width="16" height="16" fill="#00ffff"/><rect x="460" y="676" width="16" height="16" fill="#000080"/><rect x="477" y="676" width="16" height="16" fill="#0000ff"/><rect x="494" y="676" width="16" height="16" fill="#800080"/><rect x="511" y="676" width="16" height="16" fill="#ff00ff"/><rect x="528" y="676" width="16" height="16" fill="#2b0000"/><rect x="545" y="676" width="16" height="16" fill="#550000"/><rect x="562" y="676" width="16" height="16" fill="#800000"/><rect x="579" y="676" width="16" height="16" fill="#aa0000"/><rect x="596" y="676" width="16" height="16" fill="#d40000"/><rect x="613" y="676" width="16" height="16" fill="#ff0000"/><rect x="630" y="676" width="16" height="16" fill="#ff2a2a"/><rect x="647" y="676" width="16" height="16" fill="#ff5555"/><rect x="664" y="676" width="16" height="16" fill="#ff8080"/><rect x="681" y="676" width="16" height="16" fill="#ffaaaa"/><rect x="698" y="676" width="16" height="16" fill="#ffd5d5"/><rect x="715" y="676" width="16" height="16" fill="#280b0b"/><rect x="732" y="676" width="16" height="16" fill="#501616"/><rect x="749" y="676" width="16" height="16" fill="#782121"/><rect x="766" y="676" width="16" height="16" fill="#a02c2c"/><rect x="783" y="676" width="16" height="16" fill="#c83737"/><rect x="800" y="676" width="16" height="16" fill="#d35f5f"/><rect x="817" y="676" width="16" height="16" fill="#de8787"/><rect x="834" y="676" width="16" height="16" fill="#e9afaf"/><rect x="851" y="676" width="16" height="16" fill="#f4d7d7"/><rect x="868" y="676" width="16" height="16" fill="#241c1c"/><rect x="885" y="676" width="16" height="16" fill="#483737"/><rect x="902" y="676" width="16" height="16" fill="#6c5353"/><rect x="919" y="676" width="16" height="16" fill="#916f6f"/><rect x="936" y="676" width="16" height="16" fill="#ac9393"/><rect x="953" y="676" width="16" height="16" fill="#c8b7b7"/><rect x="970" y="676" width="16" height="16" fill="#e3dbdb"/><rect x="987" y="676" width="16" height="16" fill="#2b1100"/><rect x="1004" y="676" width="16" height="16" fill="#552200"/><rect x="1021" y="676" width="16" height="16" fill="#803300"/><rect x="1038" y="676" width="16" height="16" fill="#aa4400"/><rect x="1055" y="676" width="16" height="16" fill="#d45500"/><rect x="1072" y="676" width="16" height="16" fill="#ff6600"/><rect x="1089" y="676" width="16" height="16" fill="#ff7f2a"/><rect x="1106" y="676" width="16" height="16" fill="#ff9955"/><rect x="1123" y="676" width="16" height="16" fill="#ffb380"/><rect x="1140" y="676" width="16" height="16" fill="#ffccaa"/><rect x="1157" y="676" width="16" height="16" fill="#ffe6d5"/><rect x="1174" y="676" width="16" height="16" fill="#28170b"/><rect x="1191" y="676" width="16" height="16" fill="#502d16"/><rect x="1208" y="676" width="16" height="16" fill="#784421"/><rect x="1225" y="676" width="16" height="16" fill="#a05a2c"/><rect x="1242" y="676" width="16" height="16" fill="#c87137"/><rect x="1259" y="676" width="16" height="16" fill="#d38d5f"/><circle cx="604" cy="684" r="3" fill="#eaa"/></svg>
<svg style="left:1290px;top:670px" width="48" height="12"><path d="M1.5 10L7.5 3L13.5 10M32.5 3L38.5 10L44.5 3" fill="none" stroke="#f0f0f0" stroke-width="2"/></svg>
<div class="a" style="left:1345px;top:666px;width:20px;height:27px;background:#262626;border:1px solid #1a1a1a;border-radius:4px"></div>
<svg style="left:1347px;top:672px" width="16" height="16"><path d="M1 2H15M1 7.5H15M1 13H15" stroke="#f0f0f0" stroke-width="2"/></svg>
<div class="a" style="left:0;top:693px;width:1366px;height:35px;background:#333333"></div>
<div class="t" style="left:0;top:697.32px;width:37px;text-align:right;font-size:12.8px;transform:scaleX(0.938);transform-origin:100% 0">Fill:</div>
<div class="a" style="left:54px;top:694px;width:50px;height:16px;background:#d40000;border-radius:3px"></div>
<div class="t" style="left:2px;top:713.62px;font-size:12.8px;;transform:scaleX(0.938);transform-origin:0 0">Stroke:</div>
<div class="a" style="left:54px;top:711px;width:50px;height:16px;background:#000;border-radius:3px"></div>
<div class="t" style="left:114px;top:714.12px;font-size:12.8px;;transform:scaleX(0.938);transform-origin:0 0">0.305</div>
<div class="t" style="left:148px;top:705.12px;font-size:12.8px;;transform:scaleX(0.938);transform-origin:0 0">O:</div>
<div class="ent" style="left:162px;top:695px;width:72px;height:33px"></div>
<div class="pm" style="left:199px;top:696px;height:31px;background:#232323"></div><div class="pm" style="left:216px;top:696px;height:31px;background:#232323"></div>
<div class="t" style="left:170px;top:705.12px;font-size:12.8px;;transform:scaleX(0.938);transform-origin:0 0">100</div>
<div class="a" style="left:202px;top:710px;width:12px;height:2px;background:#e8e8e8"></div>
<svg style="left:219px;top:705px" width="12" height="12"><path d="M0 6h12M6 0v12" stroke="#555" stroke-width="2"/></svg>
<div class="a" style="left:261px;top:706px;width:3px;height:12px;background:#3584e4"></div>
<div class="t" style="left:270px;top:705.12px;font-size:12.8px;;transform:scaleX(0.938);transform-origin:0 0">Layer 1</div>
<svg style="left:327px;top:705px" width="16" height="12" viewBox="0 0 16 12"><path d="M1 6Q8 -2 15 6Q8 14 1 6Z" fill="none" stroke="#f0f0f0" stroke-width="1.6"/><circle cx="8" cy="6" r="2.8" fill="#f0f0f0"/><path d="M2 3L0 1M14 3L16 1M8 1V-1" stroke="#f0f0f0"/></svg>
<svg style="left:365px;top:702px" width="15" height="16" viewBox="0 0 15 16"><path d="M8 8V5a2.8 2.8 0 0 1 5.6 0V6" fill="none" stroke="#f0f0f0" stroke-width="1.8"/><rect x="1" y="8" width="9" height="7.5" fill="#f0f0f0"/></svg>
<div class="a" style="left:389px;top:697px;width:1px;height:28px;background:#2a2a2a"></div>
<div class="t" style="left:397px;top:705.17px;font-size:12.8px;;transform:scaleX(0.914);transform-origin:0 0"><b>Path</b> 141 nodes in layer <b>Layer 1</b>. Click selection again to toggle scale/rotation handles.</div>
<div class="a" style="left:1066px;top:697px;width:1px;height:28px;background:#2a2a2a"></div>
<div class="t" style="left:1077px;top:697.20px;font-size:12.8px;;transform:scaleX(0.898);transform-origin:0 0">X:</div>
<div class="t" style="left:1077px;top:714.70px;font-size:12.8px;;transform:scaleX(0.898);transform-origin:0 0">Y:</div>
<div class="t" style="left:1092px;top:696.90px;width:41px;text-align:right;font-size:12.8px;transform:scaleX(0.898);transform-origin:100% 0">-4.08</div>
<div class="t" style="left:1092px;top:714.40px;width:41px;text-align:right;font-size:12.8px;transform:scaleX(0.898);transform-origin:100% 0">-51.93</div>
<div class="t" style="left:1142px;top:705.12px;font-size:12.8px;;transform:scaleX(0.938);transform-origin:0 0">Z:</div>
<div class="ent" style="left:1152px;top:694px;width:88px;height:33px"></div>
<div class="pm" style="left:1196px;top:695px;height:31px;background:#232323"></div><div class="pm" style="left:1216px;top:695px;height:31px;background:#232323"></div>
<div class="t" style="left:1163px;top:705.12px;font-size:12.8px;;transform:scaleX(0.938);transform-origin:0 0">45%</div>
<div class="a" style="left:1200px;top:709px;width:12px;height:2px;background:#e8e8e8"></div>
<svg style="left:1220px;top:704px" width="12" height="12"><path d="M0 6h12M6 0v12" stroke="#e8e8e8" stroke-width="2"/></svg>
<div class="t" style="left:1250px;top:705.12px;font-size:12.8px;;transform:scaleX(0.938);transform-origin:0 0">R:</div>
<div class="ent" style="left:1261px;top:694px;width:93px;height:33px"></div>
<div class="pm" style="left:1310px;top:695px;height:31px;background:#232323"></div><div class="pm" style="left:1331px;top:695px;height:31px;background:#232323"></div>
<div class="t" style="left:1274px;top:705.12px;font-size:12.8px;;transform:scaleX(0.938);transform-origin:0 0">0.00°</div>
<div class="a" style="left:1314px;top:709px;width:12px;height:2px;background:#e8e8e8"></div>
<svg style="left:1335px;top:704px" width="12" height="12"><path d="M0 6h12M6 0v12" stroke="#e8e8e8" stroke-width="2"/></svg>
</div>
<!-- taskbar -->
<div id="taskbar">
<div class="a" style="left:0;top:728px;width:1366px;height:40px;background:#1f1f1f"></div>
<svg style="left:16px;top:740px" width="17" height="17" viewBox="0 0 17 17" fill="#fff"><path d="M0 2.3L7 1.3V8H0zM8 1.2L17 0V8H8zM0 9H7V15.7L0 14.7zM8 9H17V17L8 15.8z"/></svg>
<div class="a" style="left:49px;top:728px;width:287px;height:40px;background:#f2f2f2"></div>
<svg style="left:60px;top:740px" width="17" height="17" viewBox="0 0 17 17"><circle cx="10.5" cy="6.5" r="5.3" fill="none" stroke="#222" stroke-width="1.4"/><path d="M6.7 10.3L1 16" stroke="#222" stroke-width="1.6"/></svg>
<div class="t" style="left:88px;top:741px;font-size:14.4px;color:#2a2a2a">Type here to search</div>
<svg style="left:270px;top:728px" width="70" height="40" viewBox="0 0 70 40"><defs><linearGradient id="pb" x1="0" y1="0" x2="1" y2="1"><stop offset="0" stop-color="#f4f0fa"/><stop offset="1" stop-color="#9a82c8"/></linearGradient></defs><path d="M2 40 Q10 31 20 31 Q35 31 48 36 Q55 37 56 40Z" fill="#c5b998"/><ellipse cx="23" cy="22" rx="8" ry="9" fill="url(#pb)"/><path d="M17 10 Q22 11 28 13 Q36 20 42 27 L36 29 Q31 28 27 24 Q22 16 17 14Z" fill="#26303c"/><circle cx="20.5" cy="8" r="5.3" fill="#26303c"/><ellipse cx="20" cy="8.5" rx="4" ry="3.8" fill="#cfc6ea"/><circle cx="19.2" cy="7.8" r="1.2" fill="#5a2a2a"/><path d="M16 7.5 L10 11.5 Q13 13.5 17 11.5Z" fill="#e8502a"/><path d="M17 30 L20 30 L22 34 L18 37 L16 33Z M24 32 L28 32 L27 36 L22 39 L21 35Z" fill="#f0603a"/></svg>
<svg style="left:351px;top:740px" width="18" height="16" viewBox="0 0 18 16"><g fill="none" stroke="#fff" stroke-width="1.3"><path d="M1 0.7H12M1 15.3H12"/><rect x="2" y="3.5" width="9" height="9"/><path d="M15.5 5V16"/></g><rect x="14.5" y="0" width="2.2" height="3" fill="#fff"/></svg>
<svg style="left:396px;top:736px" width="25" height="25" viewBox="0 0 25 25"><defs><linearGradient id="eg1" x1="0" y1="0" x2="1" y2="1"><stop offset="0" stop-color="#35c1f1"/><stop offset="0.6" stop-color="#1f8fde"/><stop offset="1" stop-color="#0b5fb4"/></linearGradient><linearGradient id="eg2" x1="0" y1="0" x2="1" y2="0"><stop offset="0" stop-color="#1aa8e8"/><stop offset="1" stop-color="#66d06a"/></linearGradient></defs><circle cx="12.5" cy="12.5" r="12" fill="url(#eg1)"/><path d="M4 8 Q10 -2 20 3 Q26 8 24 14 Q22 17 17 16 L10 16 Q10 11 14 10 Q10 7 4 8Z" fill="url(#eg2)"/><path d="M10 15 Q9 21 16 23 Q10 24 6 20 Q3 15 6 10 Q8 8 11 9 Q8 11 10 15Z" fill="#0c4a9a"/><circle cx="14" cy="13" r="2.6" fill="#1f1f1f"/></svg>
<svg style="left:440px;top:739px" width="22" height="18" viewBox="0 0 22 18"><path d="M0 1H8L10 3H22V17H0Z" fill="#e8b42e"/><rect x="0" y="4" width="22" height="13" fill="#ffd666"/><path d="M5 17V10H17V17H14V13H8V17Z" fill="#2b88d8"/></svg>
<div class="a" style="left:434px;top:766px;width:25px;height:2px;background:#76b9ed"></div><div class="a" style="left:460px;top:766px;width:8px;height:2px;background:#4f8bbd"></div>
<svg style="left:482px;top:737px" width="23" height="23" viewBox="0 0 23 23"><path d="M7 6V3Q7 1 9 1H14Q16 1 16 3V6" fill="none" stroke="#29a8e0" stroke-width="1.8"/><rect x="0" y="5" width="23" height="18" rx="2" fill="#f4f4f4"/><rect x="7" y="9" width="4" height="4" fill="#f25022"/><rect x="12" y="9" width="4" height="4" fill="#7fba00"/><rect x="7" y="14" width="4" height="4" fill="#00a4ef"/><rect x="12" y="14" width="4" height="4" fill="#ffb900"/></svg>
<svg style="left:525px;top:736px" width="25" height="23" viewBox="0 0 25 23"><path d="M0 7L12.5 0L25 7V23H0Z" fill="#0f6cbd"/><path d="M0 7H25V23H0Z" fill="#28a8ea"/><path d="M0 7L12.5 14L25 7Z" fill="#e8e8e8"/><path d="M0 23L12.5 13L25 23Z" fill="#50c0f0"/></svg>
<svg style="left:569px;top:737px" width="22" height="23" viewBox="0 0 22 23"><defs><linearGradient id="cp" x1="0" y1="0" x2="1" y2="1"><stop offset="0" stop-color="#7f8cf0"/><stop offset="0.5" stop-color="#3d9ae8"/><stop offset="1" stop-color="#c56ee0"/></linearGradient></defs><path d="M11 0L21 5.5V17.5L11 23L1 17.5V5.5Z" fill="url(#cp)"/><circle cx="11" cy="11.5" r="4" fill="#1f1f1f"/><path d="M6 5 L11 7.5 L11 3Z" fill="#b98ef0"/></svg>
<div class="a" style="left:563px;top:766px;width:34px;height:2px;background:#76b9ed"></div>
<svg style="left:611px;top:736px" width="27" height="27" viewBox="0 0 27 27"><circle cx="12.5" cy="12.5" r="12" fill="#db4437"/><path d="M12.5 12.5L2.1 18.5A12 12 0 0 1 2.1 6.5Z" fill="#0f9d58"/><path d="M12.5 12.5 L2.1 18.5 A12 12 0 0 0 22.9 18.5 Z" fill="#0f9d58"/><path d="M12.5 12.5L22.9 6.5A12 12 0 0 1 12.5 24.5Z" fill="#ffcd40"/><circle cx="12.5" cy="12.5" r="5.3" fill="#fff"/><circle cx="12.5" cy="12.5" r="4.2" fill="#4285f4"/><circle cx="19" cy="19" r="7" fill="#8a7050"/><circle cx="19" cy="17" r="3" fill="#d8b890"/></svg>
<div class="a" style="left:606px;top:766px;width:25px;height:2px;background:#76b9ed"></div><div class="a" style="left:632px;top:766px;width:8px;height:2px;background:#4f8bbd"></div>
<svg style="left:653px;top:737px" width="23" height="22" viewBox="0 0 23 22"><path d="M6 1L22 3L18 21L2 18Z" fill="#cfe6ee"/><path d="M6 1L22 3L21 7L5 5Z" fill="#a8b8c0"/><path d="M2 18L6 4L9 5L5 19Z" fill="#5ab0d0"/><path d="M19 3L22 4L20 18L18 20Z" fill="#e0b040"/></svg>
<div class="a" style="left:649px;top:766px;width:33px;height:2px;background:#76b9ed"></div>
<svg style="left:695px;top:737px" width="24" height="23" viewBox="0 0 24 23"><ellipse cx="12" cy="11.5" rx="11.5" ry="11.5" fill="#e0101a"/><ellipse cx="12" cy="11.5" rx="5" ry="8.5" fill="#1f1f1f"/></svg>
<div class="a" style="left:691px;top:766px;width:33px;height:2px;background:#76b9ed"></div>
<svg style="left:738px;top:737px" width="23" height="22" viewBox="0 0 23 22"><rect x="8" y="2" width="14" height="18" fill="#fff" stroke="#1d6f42" stroke-width="1"/><path d="M12 2V20M17 2V20M8 6H22M8 10H22M8 14H22" stroke="#1d6f42" stroke-width="1"/><path d="M0 2.5L13 0V22L0 19.5Z" fill="#1d6f42"/><path d="M3.5 7L9 15M9 7L3.5 15" stroke="#fff" stroke-width="1.8"/></svg>
<div class="a" style="left:733px;top:766px;width:33px;height:2px;background:#76b9ed"></div>
<div class="a" style="left:770px;top:728px;width:42px;height:40px;background:#4d4d4d"></div>
<svg style="left:780px;top:736px" width="22" height="25" viewBox="0 0 22 25"><path d="M11 1L21 12Q16 15 11 14Q6 15 1 12Z" fill="#111"/><path d="M11 2L15 7Q13 9 11 8Q9 9 7 7Z" fill="#fff"/><path d="M6 8L11 13L16 8L18 11Q11 14 4 11Z" fill="#3070b0" opacity="0.8"/><path d="M3 13Q11 17 19 13L16 18Q12 16 10 19Q8 22 12 23L6 23Q4 21 7 18Z" fill="#111"/></svg>
<div class="a" style="left:770px;top:766px;width:42px;height:2px;background:#76b9ed"></div>
<svg style="left:822px;top:737px" width="22" height="22" viewBox="0 0 22 22"><rect x="0" y="0" width="22" height="22" fill="#29a3ec"/><path d="M0 22V14L8 7L16 14L22 10V22Z" fill="#1a5aa8"/><path d="M8 22L16 14L22 18V22Z" fill="#2f73c8"/><circle cx="15" cy="5" r="2.2" fill="#fff"/></svg>
<div class="a" style="left:817px;top:766px;width:33px;height:2px;background:#76b9ed"></div>
<svg style="left:863px;top:736px" width="27" height="27" viewBox="0 0 27 27"><circle cx="12.5" cy="12.5" r="12" fill="#db4437"/><path d="M12.5 12.5L2.1 18.5A12 12 0 0 1 2.1 6.5Z" fill="#0f9d58"/><path d="M12.5 12.5 L2.1 18.5 A12 12 0 0 0 22.9 18.5 Z" fill="#0f9d58"/><path d="M12.5 12.5L22.9 6.5A12 12 0 0 1 12.5 24.5Z" fill="#ffcd40"/><circle cx="12.5" cy="12.5" r="5.3" fill="#fff"/><circle cx="12.5" cy="12.5" r="4.2" fill="#4285f4"/><circle cx="18.5" cy="19" r="7.3" fill="#8a9aa4"/><text x="18.5" y="22.5" font-size="10" text-anchor="middle" fill="#fff" font-family="Liberation Sans">S</text></svg>
<div class="a" style="left:859px;top:766px;width:33px;height:2px;background:#76b9ed"></div>
<svg style="left:904px;top:736px" width="25" height="25" viewBox="0 0 25 25"><ellipse cx="10" cy="14" rx="10" ry="7.5" fill="#cfe4f0"/><circle cx="5" cy="14" r="1.6" fill="#e03030"/><circle cx="8" cy="10" r="1.6" fill="#30b040"/><circle cx="12" cy="9" r="1.6" fill="#f0c020"/><circle cx="10" cy="15" r="1.5" fill="#333"/><path d="M20 2L23 4L12 24L10 23Z" fill="#e08a20"/><path d="M20 2L24 0L23 4Z" fill="#c0a060"/></svg>
<div class="a" style="left:901px;top:766px;width:33px;height:2px;background:#76b9ed"></div>
<svg style="left:962px;top:736px" width="26" height="25" viewBox="0 0 26 25"><circle cx="14" cy="13" r="10" fill="#f5a000"/><ellipse cx="7" cy="6" rx="6" ry="3.5" fill="#a8c8f0"/><ellipse cx="19" cy="20" rx="6.5" ry="3.5" fill="#a8c8f0"/></svg>
<div class="t" style="left:995px;top:742.6px;font-size:13.5px;color:#fff">31°C</div>
<svg style="left:1050px;top:743px" width="14" height="9"><path d="M1 8L7 2L13 8" fill="none" stroke="#fff" stroke-width="1.4"/></svg>
<svg style="left:1073px;top:740px" width="16" height="16"><circle cx="8" cy="8" r="7" fill="none" stroke="#fff" stroke-width="1.4"/><circle cx="8" cy="8" r="3.8" fill="#fff"/></svg>
<svg style="left:1099px;top:739px" width="14" height="18" viewBox="0 0 14 18"><rect x="1" y="5" width="8" height="8" rx="1" fill="none" stroke="#fff" stroke-width="1.2"/><path d="M9 8L13 6V12L9 10" fill="none" stroke="#fff" stroke-width="1.2"/><path d="M3 1H9M3 17H9" stroke="#ccc" stroke-width="1"/></svg>
<svg style="left:1120px;top:743px" width="18" height="11" viewBox="0 0 18 11"><path d="M3 10Q0 10 0 7Q0 4 3.5 4.5Q5 0 10 1Q14 1.5 14.5 5Q18 5 18 8Q18 10 15 10Z" fill="#e8e8e8"/></svg>
<svg style="left:1144px;top:741px" width="19" height="13" viewBox="0 0 19 13"><rect x="5" y="3.5" width="12" height="8" fill="none" stroke="#fff" stroke-width="1.2"/><rect x="7" y="5.5" width="8" height="4" fill="#fff"/><path d="M17 6H18.5V9H17" fill="#fff"/><path d="M1 3V1M4 3V1M0 3H5V6L2.5 8V12" fill="none" stroke="#fff" stroke-width="1"/></svg>
<svg style="left:1171px;top:741px" width="16" height="16" viewBox="0 0 16 16"><g fill="none" stroke="#d0d0d0" stroke-width="1.2"><path d="M1 15A14 14 0 0 1 15 1M4 15A11 11 0 0 1 15 4M7 15A8 8 0 0 1 15 7"/></g><circle cx="13" cy="13" r="1.8" fill="#fff"/></svg>
<svg style="left:1192px;top:741px" width="18" height="15" viewBox="0 0 18 15"><path d="M1 5H4L9 1V14L4 10H1Z" fill="none" stroke="#fff" stroke-width="1.2"/><path d="M11 4.5Q13 7.5 11 10.5M13.5 2.5Q16.5 7.5 13.5 12.5" fill="none" stroke="#ccc" stroke-width="1.1"/></svg>
<div class="t" style="left:1214px;top:732px;width:34px;text-align:center;font-size:12px;color:#fff;line-height:16px">ENG<br>IN</div>
<div class="t" style="left:1252px;top:732px;width:58px;text-align:center;font-size:12px;color:#fff;line-height:16px">5:30 PM<br>8/5/2023</div>
<svg style="left:1324px;top:736px" width="28" height="28" viewBox="0 0 28 28"><path d="M2 3H18V14H8L4 18V14H2Z" fill="#fff"/><path d="M5 6.5H15M5 9H15M5 11.5H12" stroke="#1f1f1f" stroke-width="1"/><circle cx="19" cy="19" r="7.5" fill="#1f1f1f" stroke="#9a9a9a" stroke-width="1.2"/><text x="19" y="23.5" text-anchor="middle" font-size="12" fill="#fff" font-family="Liberation Sans">2</text></svg>
</div>

<!-- object menu -->
<div id="menu">
<div class="a" style="left:154px;top:47px;width:317px;height:659px;background:#2e2e2e;border:1px solid #161616;border-top-color:#101010"></div>
<div class="t" style="left:186px;top:54.8px;font-size:12.8px;color:#f2f2f2;transform:scaleX(0.91);transform-origin:0 0">Layers and Objects...</div>
<div class="t" style="left:330px;top:54.8px;width:131px;text-align:right;font-size:12.8px;color:#b4b4b4;transform:scaleX(0.91);transform-origin:100% 0">Shift+Ctrl+L</div>
<div class="t" style="left:186px;top:79.8px;font-size:12.8px;color:#f2f2f2;transform:scaleX(0.91);transform-origin:0 0">Fill and Stroke...</div>
<div class="t" style="left:330px;top:79.8px;width:131px;text-align:right;font-size:12.8px;color:#b4b4b4;transform:scaleX(0.91);transform-origin:100% 0">Shift+Ctrl+F</div>
<div class="t" style="left:186px;top:104.8px;font-size:12.8px;color:#f2f2f2;transform:scaleX(0.91);transform-origin:0 0">Object Properties...</div>
<div class="t" style="left:330px;top:104.8px;width:131px;text-align:right;font-size:12.8px;color:#b4b4b4;transform:scaleX(0.91);transform-origin:100% 0">Shift+Ctrl+O</div>
<div class="t" style="left:186px;top:129.8px;font-size:12.8px;color:#f2f2f2;transform:scaleX(0.91);transform-origin:0 0">Symbols...</div>
<div class="t" style="left:330px;top:129.8px;width:131px;text-align:right;font-size:12.8px;color:#b4b4b4;transform:scaleX(0.91);transform-origin:100% 0">Shift+Ctrl+Y</div>
<div class="t" style="left:186px;top:154.8px;font-size:12.8px;color:#f2f2f2;transform:scaleX(0.91);transform-origin:0 0">Paint Servers...</div>
<div class="t" style="left:186px;top:179.8px;font-size:12.8px;color:#f2f2f2;transform:scaleX(0.91);transform-origin:0 0">Selectors and CSS...</div>
<div class="t" style="left:330px;top:179.8px;width:131px;text-align:right;font-size:12.8px;color:#b4b4b4;transform:scaleX(0.91);transform-origin:100% 0">Shift+Ctrl+Q</div>
<div class="a" style="left:155px;top:198px;width:315px;height:1px;background:#272727"></div>
<div class="t" style="left:186px;top:205.8px;font-size:12.8px;color:#f2f2f2;transform:scaleX(0.91);transform-origin:0 0">Group</div>
<div class="t" style="left:330px;top:205.8px;width:131px;text-align:right;font-size:12.8px;color:#b4b4b4;transform:scaleX(0.91);transform-origin:100% 0">Ctrl+G</div>
<div class="a" style="left:155px;top:224px;width:315px;height:25px;background:#174e9a"></div>
<div class="t" style="left:186px;top:230.8px;font-size:12.8px;color:#f2f2f2;transform:scaleX(0.91);transform-origin:0 0">Ungroup</div>
<div class="t" style="left:330px;top:230.8px;width:131px;text-align:right;font-size:12.8px;color:#b4b4b4;transform:scaleX(0.91);transform-origin:100% 0">Shift+Ctrl+G</div>
<div class="t" style="left:186px;top:255.8px;font-size:12.8px;color:#f2f2f2;transform:scaleX(0.91);transform-origin:0 0">Pop Selected Objects out of Group</div>
<div class="a" style="left:155px;top:274px;width:315px;height:1px;background:#272727"></div>
<div class="t" style="left:186px;top:281.8px;font-size:12.8px;color:#f2f2f2;transform:scaleX(0.91);transform-origin:0 0">Clip</div>
<svg style="left:452px;top:282px" width="7" height="12"><path d="M0 0L7 6L0 12Z" fill="#f0f0f0"/></svg>
<div class="t" style="left:186px;top:306.8px;font-size:12.8px;color:#f2f2f2;transform:scaleX(0.91);transform-origin:0 0">Mask</div>
<svg style="left:452px;top:307px" width="7" height="12"><path d="M0 0L7 6L0 12Z" fill="#f0f0f0"/></svg>
<div class="t" style="left:186px;top:331.8px;font-size:12.8px;color:#f2f2f2;transform:scaleX(0.91);transform-origin:0 0">Pattern</div>
<svg style="left:452px;top:332px" width="7" height="12"><path d="M0 0L7 6L0 12Z" fill="#f0f0f0"/></svg>
<div class="a" style="left:155px;top:350px;width:315px;height:1px;background:#272727"></div>
<div class="t" style="left:186px;top:357.8px;font-size:12.8px;color:#f2f2f2;transform:scaleX(0.91);transform-origin:0 0">Objects to Marker</div>
<div class="t" style="left:186px;top:382.8px;font-size:12.8px;color:#f2f2f2;transform:scaleX(0.91);transform-origin:0 0">Objects to Guides</div>
<div class="t" style="left:330px;top:382.8px;width:131px;text-align:right;font-size:12.8px;color:#b4b4b4;transform:scaleX(0.91);transform-origin:100% 0">Shift+G</div>
<div class="a" style="left:155px;top:401px;width:315px;height:1px;background:#272727"></div>
<svg style="left:161px;top:407px" width="17" height="17" viewBox="0 0 17 17"><rect x="1" y="0" width="13" height="2" fill="#f0f0f0"/><g fill="#a0a0a0"><rect x="1" y="4" width="5" height="2"/><rect x="1" y="8" width="5" height="2"/><rect x="1" y="12" width="5" height="2"/></g><path d="M10.5 14V6" stroke="#00a000" stroke-width="2"/><path d="M7.5 7L10.5 3.5L13.5 7Z" fill="#00a000"/></svg>
<div class="t" style="left:183px;top:408.8px;font-size:12.8px;color:#f2f2f2;transform:scaleX(0.91);transform-origin:0 0">Raise to Top</div>
<div class="t" style="left:330px;top:408.8px;width:131px;text-align:right;font-size:12.8px;color:#b4b4b4;transform:scaleX(0.91);transform-origin:100% 0">Home</div>
<svg style="left:161px;top:432px" width="17" height="17" viewBox="0 0 17 17"><g fill="#a0a0a0"><rect x="1" y="0" width="5" height="2"/><rect x="1" y="8" width="5" height="2"/><rect x="1" y="12" width="5" height="2"/></g><rect x="1" y="4" width="13" height="2" fill="#f0f0f0"/><path d="M10.5 14V10" stroke="#00a000" stroke-width="2"/><path d="M7.5 10.5L10.5 7L13.5 10.5Z" fill="#00a000"/></svg>
<div class="t" style="left:183px;top:433.8px;font-size:12.8px;color:#f2f2f2;transform:scaleX(0.91);transform-origin:0 0">Raise</div>
<div class="t" style="left:330px;top:433.8px;width:131px;text-align:right;font-size:12.8px;color:#b4b4b4;transform:scaleX(0.91);transform-origin:100% 0">Page Up</div>
<svg style="left:161px;top:457px" width="17" height="17" viewBox="0 0 17 17"><g fill="#a0a0a0"><rect x="1" y="0" width="5" height="2"/><rect x="1" y="4" width="5" height="2"/><rect x="1" y="12" width="5" height="2"/></g><rect x="1" y="8" width="13" height="2" fill="#f0f0f0"/><path d="M10.5 0V4" stroke="#00a000" stroke-width="2"/><path d="M7.5 3.5L10.5 7L13.5 3.5Z" fill="#00a000"/></svg>
<div class="t" style="left:183px;top:458.8px;font-size:12.8px;color:#f2f2f2;transform:scaleX(0.91);transform-origin:0 0">Lower</div>
<div class="t" style="left:330px;top:458.8px;width:131px;text-align:right;font-size:12.8px;color:#b4b4b4;transform:scaleX(0.91);transform-origin:100% 0">Page Down</div>
<svg style="left:161px;top:482px" width="17" height="17" viewBox="0 0 17 17"><g fill="#a0a0a0"><rect x="1" y="0" width="5" height="2"/><rect x="1" y="4" width="5" height="2"/><rect x="1" y="8" width="5" height="2"/></g><rect x="1" y="12" width="13" height="2" fill="#f0f0f0"/><path d="M10.5 0V8" stroke="#00a000" stroke-width="2"/><path d="M7.5 7L10.5 10.5L13.5 7Z" fill="#00a000"/></svg>
<div class="t" style="left:183px;top:483.8px;font-size:12.8px;color:#f2f2f2;transform:scaleX(0.91);transform-origin:0 0">Lower to Bottom</div>
<div class="t" style="left:330px;top:483.8px;width:131px;text-align:right;font-size:12.8px;color:#b4b4b4;transform:scaleX(0.91);transform-origin:100% 0">End</div>
<div class="a" style="left:155px;top:502px;width:315px;height:1px;background:#272727"></div>
<svg style="left:161px;top:507px" width="17" height="17" viewBox="0 0 17 17"><rect x="0" y="0" width="5" height="10" fill="#a0a0a0"/><rect x="6" y="11" width="10" height="5" fill="#f0f0f0"/><path d="M7 2Q11 1 12 5" fill="none" stroke="#00a000" stroke-width="1.8"/><path d="M9.5 4.5L12.5 8L14.5 4Z" fill="#00a000"/></svg>
<div class="t" style="left:183px;top:509.8px;font-size:12.8px;color:#f2f2f2;transform:scaleX(0.91);transform-origin:0 0">Rotate 90° CW</div>
<div class="t" style="left:330px;top:509.8px;width:131px;text-align:right;font-size:12.8px;color:#b4b4b4;transform:scaleX(0.91);transform-origin:100% 0">Ctrl+]</div>
<svg style="left:161px;top:532px" width="17" height="17" viewBox="0 0 17 17"><rect x="11" y="0" width="5" height="10" fill="#a0a0a0"/><rect x="0" y="11" width="10" height="5" fill="#f0f0f0"/><path d="M9 2Q5 1 4 5" fill="none" stroke="#00a000" stroke-width="1.8"/><path d="M6.5 4.5L3.5 8L1.5 4Z" fill="#00a000"/></svg>
<div class="t" style="left:183px;top:534.8px;font-size:12.8px;color:#f2f2f2;transform:scaleX(0.91);transform-origin:0 0">Rotate 90° CCW</div>
<div class="t" style="left:330px;top:534.8px;width:131px;text-align:right;font-size:12.8px;color:#b4b4b4;transform:scaleX(0.91);transform-origin:100% 0">Ctrl+[</div>
<svg style="left:161px;top:558px" width="17" height="17" viewBox="0 0 17 17"><path d="M7 1L1 12H7Z" fill="#8c8c8c"/><path d="M9 1L15 12H9Z" fill="#f0f0f0"/><path d="M8 0V14" stroke="#f0f0f0" stroke-width="1" stroke-dasharray="1.5 1"/></svg>
<div class="t" style="left:183px;top:559.8px;font-size:12.8px;color:#f2f2f2;transform:scaleX(0.91);transform-origin:0 0">Flip Horizontal</div>
<div class="t" style="left:330px;top:559.8px;width:131px;text-align:right;font-size:12.8px;color:#b4b4b4;transform:scaleX(0.91);transform-origin:100% 0">H</div>
<svg style="left:161px;top:583px" width="17" height="17" viewBox="0 0 17 17"><path d="M2 0L13 6H2Z" fill="#8c8c8c"/><path d="M2 8L13 8L2 14Z" fill="#f0f0f0"/><path d="M0 7H15" stroke="#f0f0f0" stroke-width="1" stroke-dasharray="1.5 1"/></svg>
<div class="t" style="left:183px;top:584.8px;font-size:12.8px;color:#f2f2f2;transform:scaleX(0.91);transform-origin:0 0">Flip Vertical</div>
<div class="t" style="left:330px;top:584.8px;width:131px;text-align:right;font-size:12.8px;color:#b4b4b4;transform:scaleX(0.91);transform-origin:100% 0">V</div>
<div class="a" style="left:155px;top:603px;width:315px;height:1px;background:#272727"></div>
<div class="t" style="left:186px;top:610.8px;font-size:12.8px;color:#f2f2f2;transform:scaleX(0.91);transform-origin:0 0">Unhide All</div>
<div class="t" style="left:186px;top:635.8px;font-size:12.8px;color:#f2f2f2;transform:scaleX(0.91);transform-origin:0 0">Unlock All</div>
<div class="a" style="left:155px;top:654px;width:315px;height:1px;background:#272727"></div>
<div class="t" style="left:186px;top:661.8px;font-size:12.8px;color:#f2f2f2;transform:scaleX(0.91);transform-origin:0 0">Transform...</div>
<div class="t" style="left:330px;top:661.8px;width:131px;text-align:right;font-size:12.8px;color:#b4b4b4;transform:scaleX(0.91);transform-origin:100% 0">Shift+Ctrl+M</div>
<div class="t" style="left:186px;top:686.8px;font-size:12.8px;color:#f2f2f2;transform:scaleX(0.91);transform-origin:0 0">Align and Distribute...</div>
<div class="t" style="left:330px;top:686.8px;width:131px;text-align:right;font-size:12.8px;color:#b4b4b4;transform:scaleX(0.91);transform-origin:100% 0">Shift+Ctrl+A</div>
<div class="a" style="left:164px;top:253px;width:162px;height:44px;background:rgba(8,8,8,0.86);border:1px solid #444444;border-radius:6px"></div>
<div class="t" style="left:177px;top:270px;font-size:12.8px;color:#ffffff;transform:scaleX(0.928);transform-origin:0 0">Ungroup selected objects</div>
</div>
</body></html>
